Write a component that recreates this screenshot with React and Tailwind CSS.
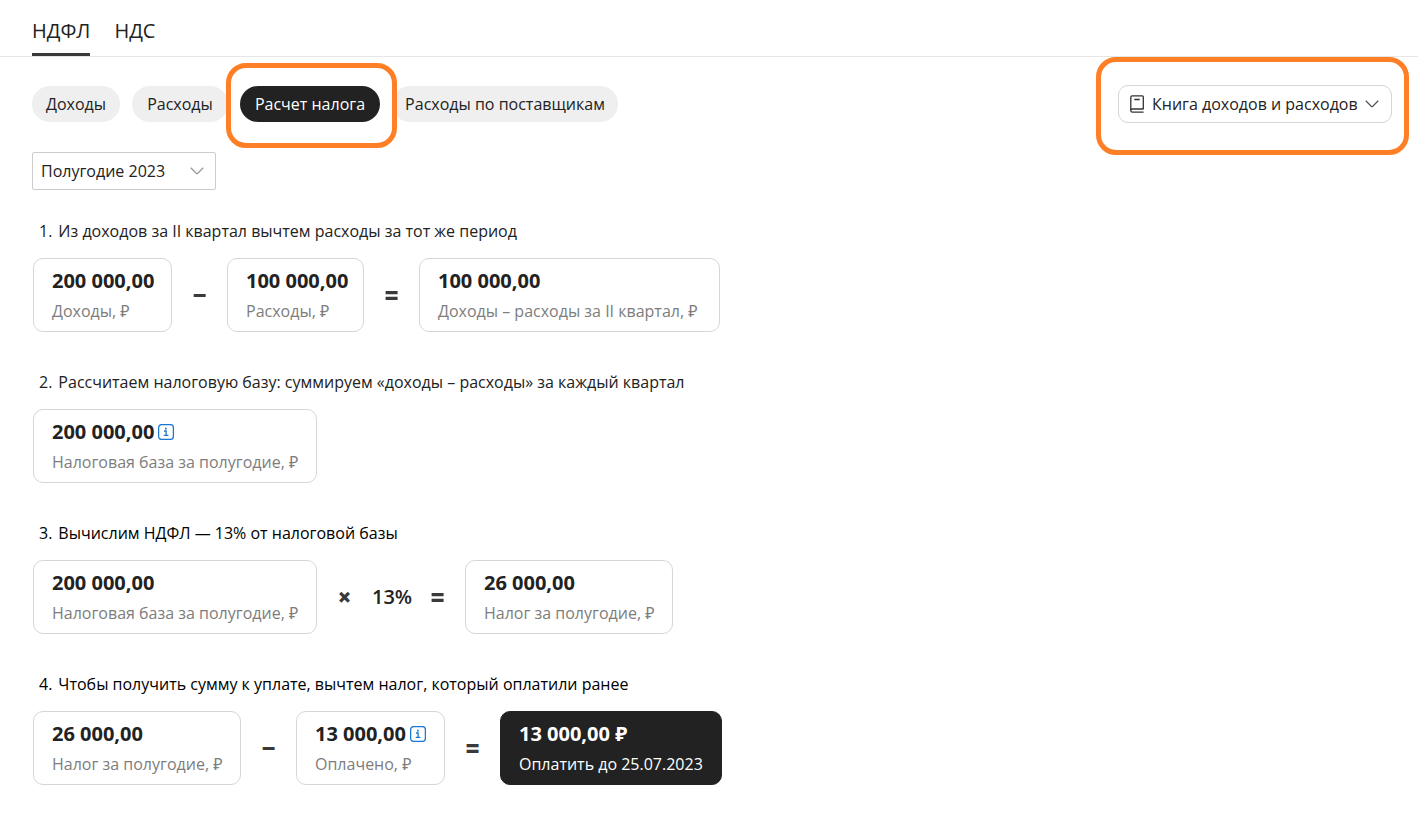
import React from 'react';

function InfoIcon() {
  return (
    <svg width="16" height="16" viewBox="0 0 16 16" fill="none" stroke="#1a77d2" aria-hidden="true">
      <rect x="0.6" y="0.6" width="14.8" height="14.8" rx="3" strokeWidth="1.3" />
      <path d="M6 7h2.1v4.2M5.8 11.4h4.6" strokeWidth="1.3" />
      <path d="M7 4.6h1.7" strokeWidth="1.6" />
    </svg>
  );
}

function BookIcon() {
  return (
    <svg width="14" height="18" viewBox="0 0 14 18" fill="none" stroke="#333" strokeWidth="1.3" aria-hidden="true">
      <path d="M13.3 14V1.7c0-.6-.3-.9-.9-.9H2.2C1.3.8.8 1.3.8 2.2v13.2c0 1 .6 1.7 1.6 1.7h11.2" />
      <path d="M13.6 14H2.4c-.9 0-1.4.4-1.6 1.1M4.3 4.5h5.4" />
    </svg>
  );
}

function Chevron({ className }) {
  return (
    <svg className={className} width="14" height="8" viewBox="0 0 14 8" fill="none" stroke="currentColor" strokeWidth="1.3" aria-hidden="true">
      <path d="M0.8 0.8 6.2 6.3q.8.7 1.6 0L13.2.8" />
    </svg>
  );
}

function Highlight({ className }) {
  return (
    <span
      aria-hidden="true"
      className={`pointer-events-none absolute z-10 rounded-[20px] border-[5px] border-[#ff7f27] ${className}`}
    />
  );
}

function Tab({ children, active }) {
  return (
    <button
      type="button"
      role="tab"
      aria-selected={!!active}
      className={`h-14 border-b-3 pt-2 text-xl leading-7 ${active ? 'border-[#3a3a3a]' : 'border-transparent'}`}
    >
      {children}
    </button>
  );
}

function Chip({ children, active, width }) {
  return (
    <button
      type="button"
      className={`h-9 rounded-full ${width} ${active ? 'bg-[#222] text-white' : 'bg-[#efefef]'}`}
    >
      {children}
    </button>
  );
}

function Card({ value, label, width, info, dark }) {
  return (
    <div
      className={`rounded-[10px] border pt-2.5 pr-3 pb-2 pl-[18px] whitespace-nowrap ${width} ${
        dark ? 'border-[#222] bg-[#222] text-white' : 'border-[#d6d6d6]'
      }`}
    >
      <div className="flex items-center gap-1 text-xl leading-6 font-bold">
        {value}
        {info && (
          <button type="button" aria-label="Подробнее">
            <InfoIcon />
          </button>
        )}
      </div>
      <div className={`mt-1.5 leading-6 ${dark ? '' : 'text-[#7d7d7d]'}`}>{label}</div>
    </div>
  );
}

function Operator({ children }) {
  return <span className="w-[55px] text-center text-2xl leading-6 font-extrabold text-[#3a3a3a]">{children}</span>;
}

function Step({ number, title, dark, children }) {
  return (
    <section className="mb-[38px]">
      <h2 className={`mb-[15px] flex gap-1.5 pl-1.5 leading-6 ${dark ? 'text-black' : ''}`}>
        <span>{number}.</span>
        <span>{title}</span>
      </h2>
      <div className="flex items-center">{children}</div>
    </section>
  );
}

export default function App() {
  return (
    <div className="bg-white font-['Open_Sans','Noto_Sans',sans-serif] text-base text-[#222]">
      <div role="tablist" className="flex gap-6 border-b border-[#e6e6e6] pl-8">
        <Tab active>НДФЛ</Tab>
        <Tab>НДС</Tab>
      </div>

      <main className="px-8">
        <div className="-mr-1.5 flex items-center justify-between pt-7">
          <div className="flex gap-3">
            <Chip width="w-[88px]">Доходы</Chip>
            <Chip width="w-24">Расходы</Chip>
            <div className="relative">
              <Chip active width="w-[140px]">Расчет налога</Chip>
              <Highlight className="-top-[23px] -right-[17px] -bottom-[26px] -left-3.5" />
            </div>
            <Chip width="w-[226px]">Расходы по поставщикам</Chip>
          </div>
          <div className="relative">
            <button type="button" className="flex h-[38px] w-[274px] items-center rounded-[10px] border border-[#d6d6d6] pr-3 pl-[11px]">
              <BookIcon />
              <span className="ml-2">Книга доходов и расходов</span>
              <Chevron className="ml-auto text-[#555]" />
            </button>
            <Highlight className="-top-7 -right-[17px] -bottom-8 -left-[22px]" />
          </div>
        </div>

        <div className="relative mt-[29px] flex w-[184px] items-center">
          <select
            aria-label="Период"
            className="h-[38px] w-full appearance-none rounded-xs border border-[#ccc] bg-white pl-2"
          >
            <option>Полугодие 2023</option>
          </select>
          <Chevron className="pointer-events-none absolute right-3 text-[#999]" />
        </div>

        <div className="mt-[29px] pl-px">
          <Step number={1} title="Из доходов за II квартал вычтем расходы за тот же период">
            <Card width="min-w-[139px]" value="200 000,00" label="Доходы, ₽" />
            <Operator>−</Operator>
            <Card width="min-w-[137px]" value="100 000,00" label="Расходы, ₽" />
            <Operator>=</Operator>
            <Card width="min-w-[301px]" value="100 000,00" label="Доходы – расходы за II квартал, ₽" />
          </Step>

          <Step number={2} title="Рассчитаем налоговую базу: суммируем «доходы – расходы» за каждый квартал">
            <Card width="min-w-[284px]" value="200 000,00" label="Налоговая база за полугодие, ₽" info />
          </Step>

          <Step number={3} title="Вычислим НДФЛ — 13% от налоговой базы" dark>
            <Card width="min-w-[284px]" value="200 000,00" label="Налоговая база за полугодие, ₽" />
            <Operator>×</Operator>
            <span className="w-[38px] text-xl leading-6 font-semibold">13%</span>
            <Operator>=</Operator>
            <Card width="min-w-[208px]" value="26 000,00" label="Налог за полугодие, ₽" />
          </Step>

          <Step number={4} title="Чтобы получить сумму к уплате, вычтем налог, который оплатили ранее" dark>
            <Card width="min-w-[208px]" value="26 000,00" label="Налог за полугодие, ₽" />
            <Operator>−</Operator>
            <Card width="min-w-[149px]" value="13 000,00" label="Оплачено, ₽" info />
            <Operator>=</Operator>
            <Card width="min-w-[222px]" value="13 000,00 ₽" label="Оплатить до 25.07.2023" dark />
          </Step>
        </div>
      </main>
    </div>
  );
}
